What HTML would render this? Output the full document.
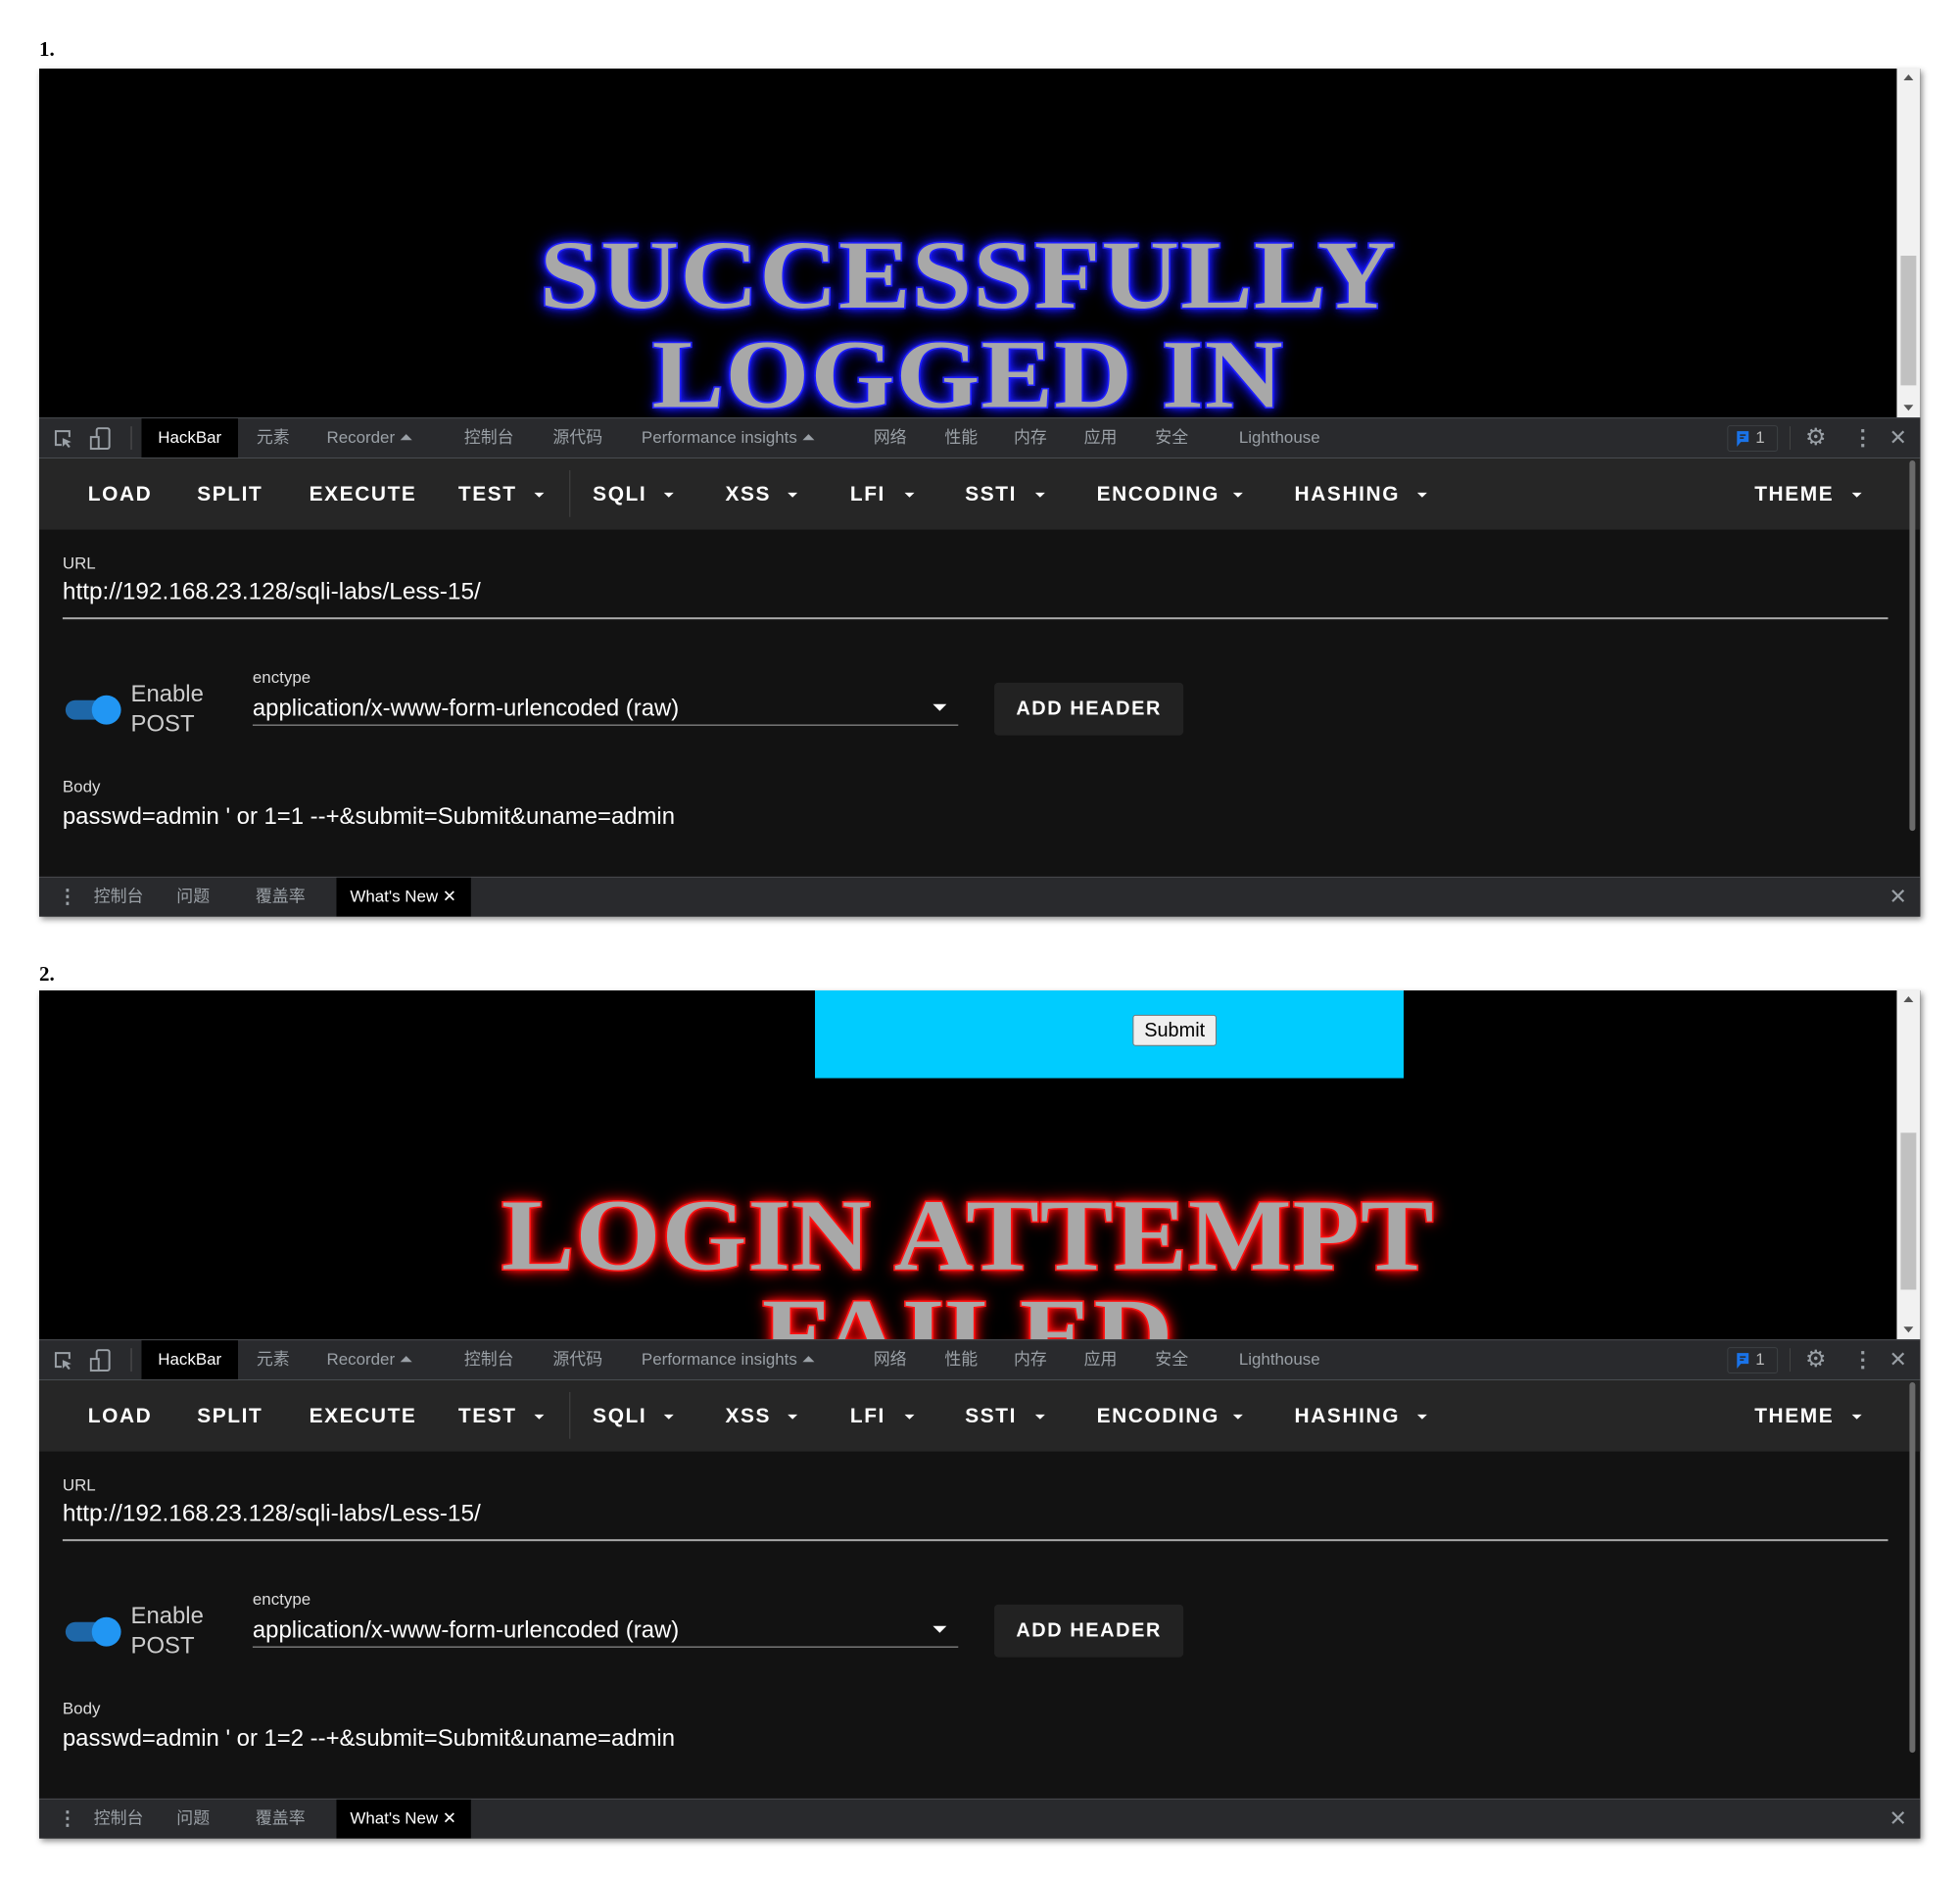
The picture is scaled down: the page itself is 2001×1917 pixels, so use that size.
<!DOCTYPE html>
<html><head><meta charset="utf-8">
<style>
*{margin:0;padding:0;box-sizing:border-box}
body{width:2001px;height:1917px;background:#fff;position:relative;overflow:hidden;font-family:"Liberation Sans","Noto Sans CJK SC",sans-serif}
.num{position:absolute;left:40px;font:bold 21px "Liberation Serif",serif;color:#000}
.frame{position:absolute;left:40px;width:1930px;height:870px;background:#121212;box-shadow:2px 3px 6px rgba(0,0,0,.45);overflow:hidden;transform:scale(0.995);transform-origin:0 0}
.a{position:absolute;white-space:nowrap}
.page{position:absolute;left:0;top:0;width:1906px;height:358px;background:#000;overflow:hidden}
.vs{position:absolute;left:1906px;top:0;width:24px;height:358px;background:#f1f1f1}
.thumb{position:absolute;left:4px;width:16px;background:#c1c1c1}
.tabbar{position:absolute;left:0;top:358px;width:1930px;height:42px;background:#292a2d;border-top:1px solid #494c50;border-bottom:1px solid #494c50}
.tab{position:absolute;top:0;height:40px;line-height:40px;font-size:17px;color:#9aa0a6}
.tool{position:absolute;left:0;top:400px;width:1930px;height:73px;background:#262626}
.tb{position:absolute;top:0;line-height:73px;font-size:21px;font-weight:bold;color:#fff;letter-spacing:1.6px}
.ar{position:absolute;top:35px;width:0;height:0;border-left:5px solid transparent;border-right:5px solid transparent;border-top:5px solid #fff}
.lbl{position:absolute;font-size:17px;color:#ddd}
.val{position:absolute;font-size:24px;color:#fff}
.bot{position:absolute;left:0;top:829px;width:1930px;height:41px;background:#292a2d;border-top:1px solid #494c50}
.bt{position:absolute;top:0;line-height:40px;font-size:17px;color:#9aa0a6}
.ban{position:absolute;left:0;width:1906px;text-align:center;font:900 100px/102px "Liberation Serif",serif;color:#a8a8a8;letter-spacing:1px}
</style></head><body>

<div class="num" style="top:38px">1.</div>
<div class="num" style="top:982px">2.</div>

<div class="frame" style="top:70px">
  <div class="page">
    <div class="ban" style="top:161px;transform:scaleX(1.11);-webkit-text-stroke:3px #3030ff;paint-order:stroke fill;text-shadow:0 0 6px #2020ff,0 0 12px #2020ff,0 0 18px #0000ff">SUCCESSFULLY<br>LOGGED IN</div>
  </div>
  <div class="vs"><div class="a" style="left:7px;top:6px;border-left:5px solid transparent;border-right:5px solid transparent;border-bottom:6px solid #555"></div><div class="thumb" style="top:192px;height:133px"></div><div class="a" style="left:7px;top:345px;border-left:5px solid transparent;border-right:5px solid transparent;border-top:6px solid #555"></div></div>
  <div class="tabbar">
    <svg class="a" style="left:14px;top:10px" width="22" height="22" viewBox="0 0 22 22"><path d="M9 17H3V3h14v6" fill="none" stroke="#9aa0a6" stroke-width="2"/><path d="M10 10l9 4-4 1 3 4-2 1-3-4-3 3z" fill="#9aa0a6"/></svg>
    <svg class="a" style="left:52px;top:9px" width="22" height="24" viewBox="0 0 22 24"><rect x="7" y="1" width="13" height="21" rx="2" fill="none" stroke="#9aa0a6" stroke-width="2"/><rect x="1" y="10" width="8" height="12" fill="#292a2d" stroke="#9aa0a6" stroke-width="2"/></svg>
    <div class="a" style="left:94px;top:8px;width:1px;height:24px;background:#555"></div>
    <div class="tab" style="left:105px;width:99px;background:#000;color:#fff;text-align:center">HackBar</div>
    <div class="tab" style="left:223px">元素</div>
    <div class="tab" style="left:295px">Recorder ⏶</div>
    <div class="tab" style="left:436px">控制台</div>
    <div class="tab" style="left:527px">源代码</div>
    <div class="tab" style="left:618px">Performance insights ⏶</div>
    <div class="tab" style="left:856px">网络</div>
    <div class="tab" style="left:929px">性能</div>
    <div class="tab" style="left:1000px">内存</div>
    <div class="tab" style="left:1072px">应用</div>
    <div class="tab" style="left:1145px">安全</div>
    <div class="tab" style="left:1231px">Lighthouse</div>
    <div class="a" style="left:1732px;top:7px;width:52px;height:27px;border:1px solid #3c4043;border-radius:3px"></div>
    <svg class="a" style="left:1741px;top:12px" width="14" height="18" viewBox="0 0 14 18"><path d="M1 1h12v11H5l-4 5z" fill="#1a73e8"/><path d="M4 5h6M4 8h4" stroke="#292a2d" stroke-width="1.5"/></svg>
    <div class="tab" style="left:1761px;color:#bbb">1</div>
    <div class="a" style="left:1796px;top:8px;width:1px;height:24px;background:#444"></div>
    <div class="tab" style="left:1812px;font-size:24px;color:#9aa0a6">⚙</div>
    <div class="tab" style="left:1860px;font-size:22px;font-weight:bold">⋮</div>
    <div class="tab" style="left:1898px;font-size:22px">✕</div>
  </div>
  <div class="tool">
    <div class="tb" style="left:50px">LOAD</div>
    <div class="tb" style="left:162px">SPLIT</div>
    <div class="tb" style="left:277px">EXECUTE</div>
    <div class="tb" style="left:430px">TEST</div><div class="ar" style="left:508px"></div>
    <div class="a" style="left:544px;top:12px;width:1px;height:48px;background:#444"></div>
    <div class="tb" style="left:568px">SQLI</div><div class="ar" style="left:641px"></div>
    <div class="tb" style="left:704px">XSS</div><div class="ar" style="left:768px"></div>
    <div class="tb" style="left:832px">LFI</div><div class="ar" style="left:888px"></div>
    <div class="tb" style="left:950px">SSTI</div><div class="ar" style="left:1022px"></div>
    <div class="tb" style="left:1085px">ENCODING</div><div class="ar" style="left:1225px"></div>
    <div class="tb" style="left:1288px">HASHING</div><div class="ar" style="left:1414px"></div>
    <div class="tb" style="left:1760px">THEME</div><div class="ar" style="left:1860px"></div>
  </div>
  <div class="a" style="left:1919px;top:402px;width:6px;height:380px;background:#6a6a6a;border-radius:3px"></div>
  <div class="lbl" style="left:24px;top:498px">URL</div>
  <div class="val" style="left:24px;top:523px;font-size:24.5px">http://192.168.23.128/sqli-labs/Less-15/</div>
  <div class="a" style="left:24px;top:563px;width:1873px;height:2px;background:#aaa"></div>
  <div class="a" style="left:27px;top:648px;width:50px;height:20px;border-radius:10px;background:#1e67a8"></div>
  <div class="a" style="left:54px;top:643px;width:30px;height:30px;border-radius:50%;background:#2196f3"></div>
  <div class="val" style="left:94px;top:628px;color:#ccc">Enable</div>
  <div class="val" style="left:94px;top:659px;color:#ccc">POST</div>
  <div class="lbl" style="left:219px;top:615px">enctype</div>
  <div class="val" style="left:219px;top:643px">application/x-www-form-urlencoded (raw)</div>
  <div class="a" style="left:219px;top:673px;width:724px;height:1px;background:#aaa"></div>
  <div class="a" style="left:917px;top:652px;border-left:7px solid transparent;border-right:7px solid transparent;border-top:7px solid #fff"></div>
  <div class="a" style="left:980px;top:630px;width:194px;height:54px;background:#222;border-radius:4px;color:#fff;font-weight:bold;font-size:20px;letter-spacing:1.6px;line-height:54px;text-align:center">ADD HEADER</div>
  <div class="lbl" style="left:24px;top:727px">Body</div>
  <div class="val" style="left:24px;top:754px">passwd=admin ' or 1=1 --+&amp;submit=Submit&amp;uname=admin</div>
  <div class="bot">
    <div class="bt" style="left:19px;font-size:20px;font-weight:bold">⋮</div>
    <div class="bt" style="left:56px">控制台</div>
    <div class="bt" style="left:141px">问题</div>
    <div class="bt" style="left:222px">覆盖率</div>
    <div class="bt" style="left:305px;width:138px;background:#000;color:#fff;padding-left:14px">What's New ✕</div>
    <div class="bt" style="left:1898px;font-size:22px">✕</div>
  </div>
</div>

<div class="frame" style="top:1011px">
  <div class="page">
    <div class="a" style="left:796px;top:0;width:604px;height:90px;background:#00ccff"></div>
    <div class="a" style="left:1122px;top:25px;width:86px;height:32px;background:#efefef;border:1px solid #767676;border-radius:3px;font-size:20px;line-height:30px;text-align:center;color:#000">Submit</div>
    <div class="ban" style="top:201px;font-size:104px;transform:scaleX(1.08);-webkit-text-stroke:3px #ff2020;paint-order:stroke fill;text-shadow:0 0 6px #ff2020,0 0 12px #ff0000,0 0 18px #f00">LOGIN ATTEMPT<br>FAILED</div>
  </div>
  <div class="vs"><div class="a" style="left:7px;top:6px;border-left:5px solid transparent;border-right:5px solid transparent;border-bottom:6px solid #555"></div><div class="thumb" style="top:146px;height:161px"></div><div class="a" style="left:7px;top:345px;border-left:5px solid transparent;border-right:5px solid transparent;border-top:6px solid #555"></div></div>
  <div class="tabbar">
    <svg class="a" style="left:14px;top:10px" width="22" height="22" viewBox="0 0 22 22"><path d="M9 17H3V3h14v6" fill="none" stroke="#9aa0a6" stroke-width="2"/><path d="M10 10l9 4-4 1 3 4-2 1-3-4-3 3z" fill="#9aa0a6"/></svg>
    <svg class="a" style="left:52px;top:9px" width="22" height="24" viewBox="0 0 22 24"><rect x="7" y="1" width="13" height="21" rx="2" fill="none" stroke="#9aa0a6" stroke-width="2"/><rect x="1" y="10" width="8" height="12" fill="#292a2d" stroke="#9aa0a6" stroke-width="2"/></svg>
    <div class="a" style="left:94px;top:8px;width:1px;height:24px;background:#555"></div>
    <div class="tab" style="left:105px;width:99px;background:#000;color:#fff;text-align:center">HackBar</div>
    <div class="tab" style="left:223px">元素</div>
    <div class="tab" style="left:295px">Recorder ⏶</div>
    <div class="tab" style="left:436px">控制台</div>
    <div class="tab" style="left:527px">源代码</div>
    <div class="tab" style="left:618px">Performance insights ⏶</div>
    <div class="tab" style="left:856px">网络</div>
    <div class="tab" style="left:929px">性能</div>
    <div class="tab" style="left:1000px">内存</div>
    <div class="tab" style="left:1072px">应用</div>
    <div class="tab" style="left:1145px">安全</div>
    <div class="tab" style="left:1231px">Lighthouse</div>
    <div class="a" style="left:1732px;top:7px;width:52px;height:27px;border:1px solid #3c4043;border-radius:3px"></div>
    <svg class="a" style="left:1741px;top:12px" width="14" height="18" viewBox="0 0 14 18"><path d="M1 1h12v11H5l-4 5z" fill="#1a73e8"/><path d="M4 5h6M4 8h4" stroke="#292a2d" stroke-width="1.5"/></svg>
    <div class="tab" style="left:1761px;color:#bbb">1</div>
    <div class="a" style="left:1796px;top:8px;width:1px;height:24px;background:#444"></div>
    <div class="tab" style="left:1812px;font-size:24px;color:#9aa0a6">⚙</div>
    <div class="tab" style="left:1860px;font-size:22px;font-weight:bold">⋮</div>
    <div class="tab" style="left:1898px;font-size:22px">✕</div>
  </div>
  <div class="tool">
    <div class="tb" style="left:50px">LOAD</div>
    <div class="tb" style="left:162px">SPLIT</div>
    <div class="tb" style="left:277px">EXECUTE</div>
    <div class="tb" style="left:430px">TEST</div><div class="ar" style="left:508px"></div>
    <div class="a" style="left:544px;top:12px;width:1px;height:48px;background:#444"></div>
    <div class="tb" style="left:568px">SQLI</div><div class="ar" style="left:641px"></div>
    <div class="tb" style="left:704px">XSS</div><div class="ar" style="left:768px"></div>
    <div class="tb" style="left:832px">LFI</div><div class="ar" style="left:888px"></div>
    <div class="tb" style="left:950px">SSTI</div><div class="ar" style="left:1022px"></div>
    <div class="tb" style="left:1085px">ENCODING</div><div class="ar" style="left:1225px"></div>
    <div class="tb" style="left:1288px">HASHING</div><div class="ar" style="left:1414px"></div>
    <div class="tb" style="left:1760px">THEME</div><div class="ar" style="left:1860px"></div>
  </div>
  <div class="a" style="left:1919px;top:402px;width:6px;height:380px;background:#6a6a6a;border-radius:3px"></div>
  <div class="lbl" style="left:24px;top:498px">URL</div>
  <div class="val" style="left:24px;top:523px;font-size:24.5px">http://192.168.23.128/sqli-labs/Less-15/</div>
  <div class="a" style="left:24px;top:563px;width:1873px;height:2px;background:#aaa"></div>
  <div class="a" style="left:27px;top:648px;width:50px;height:20px;border-radius:10px;background:#1e67a8"></div>
  <div class="a" style="left:54px;top:643px;width:30px;height:30px;border-radius:50%;background:#2196f3"></div>
  <div class="val" style="left:94px;top:628px;color:#ccc">Enable</div>
  <div class="val" style="left:94px;top:659px;color:#ccc">POST</div>
  <div class="lbl" style="left:219px;top:615px">enctype</div>
  <div class="val" style="left:219px;top:643px">application/x-www-form-urlencoded (raw)</div>
  <div class="a" style="left:219px;top:673px;width:724px;height:1px;background:#aaa"></div>
  <div class="a" style="left:917px;top:652px;border-left:7px solid transparent;border-right:7px solid transparent;border-top:7px solid #fff"></div>
  <div class="a" style="left:980px;top:630px;width:194px;height:54px;background:#222;border-radius:4px;color:#fff;font-weight:bold;font-size:20px;letter-spacing:1.6px;line-height:54px;text-align:center">ADD HEADER</div>
  <div class="lbl" style="left:24px;top:727px">Body</div>
  <div class="val" style="left:24px;top:754px">passwd=admin ' or 1=2 --+&amp;submit=Submit&amp;uname=admin</div>
  <div class="bot">
    <div class="bt" style="left:19px;font-size:20px;font-weight:bold">⋮</div>
    <div class="bt" style="left:56px">控制台</div>
    <div class="bt" style="left:141px">问题</div>
    <div class="bt" style="left:222px">覆盖率</div>
    <div class="bt" style="left:305px;width:138px;background:#000;color:#fff;padding-left:14px">What's New ✕</div>
    <div class="bt" style="left:1898px;font-size:22px">✕</div>
  </div>
</div>

</body></html>
